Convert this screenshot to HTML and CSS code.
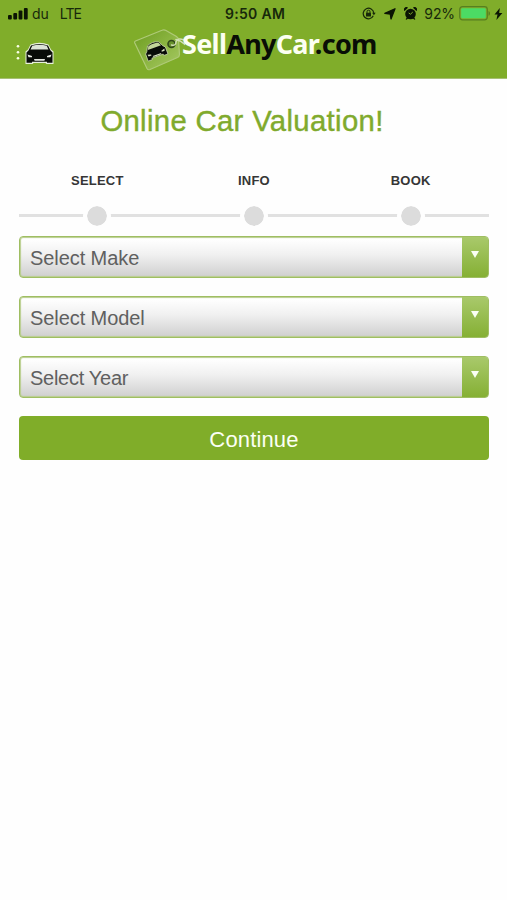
FILE: index.html
```html
<!DOCTYPE html>
<html lang="en">
<head>
<meta charset="utf-8">
<title>SellAnyCar.com</title>
<link rel="stylesheet" href="styles.css">
</head>
<body>
<header class="top">
  <div class="status">
    <div class="carrier">
      <svg class="signal" width="21" height="13" viewBox="0 0 21 13"><rect x="0" y="8" width="3.800" height="4.500" rx="1"/><rect x="5.300" y="6" width="3.800" height="6.500" rx="1"/><rect x="10.600" y="3.500" width="3.800" height="9" rx="1"/><rect x="15.900" y="1" width="3.800" height="11.500" rx="1"/></svg>
      <span class="du">du</span><span class="lte">LTE</span>
    </div>
    <span class="time">9:50 AM</span>
    <div class="power">
      <svg class="lock" width="14" height="13" viewBox="0 0 14 13" fill="none" stroke="#17280a"><path d="M11.3 8.8A5.3 5.3 0 1 1 11.8 6" stroke-width="1.2"/><path d="M10.1 5.8h3.6l-1.8 2.4z" fill="#17280a" stroke="none"/><rect x="4" y="5.7" width="5" height="3.8" rx=".5" fill="#17280a" stroke="none"/><path d="M5 6V4.7a1.5 1.5 0 0 1 3 0V6" stroke-width="1"/></svg>
      <svg class="arrow" width="12" height="12" viewBox="0 0 12 12"><path d="M11 .8 7 11 6.300 6 .8 5.300z" stroke="#0b1404" stroke-width="1.300" stroke-linejoin="round"/></svg>
      <svg class="alarm" width="13" height="13" viewBox="0 0 13 13"><circle cx="6.5" cy="7" r="5.300"/><path d="M.6 4A2.3 2.3 0 0 1 4 .8zM12.4 4A2.3 2.3 0 0 0 9 .8zM2.8 10.5 1.6 12.2l1 .5 1.7-1.4zM10.2 10.5l1.2 1.7-1 .5-1.7-1.4z"/><path d="M6.500 7.200 8.800 5M6.500 7.200 4.700 6" fill="none" stroke="#80ad2a" stroke-width="1"/></svg>
      <span class="percent">92%</span>
      <svg class="battery" width="32" height="15" viewBox="0 0 32 15"><rect x=".7" y=".7" width="27.6" height="13.1" rx="2.8" fill="none" stroke="#577f20" stroke-width="1.2"/><rect x="2.2" y="2.2" width="24.6" height="10.1" rx="1.2" fill="#4cdb64"/><path d="M29.5 4.9c2 .8 2 4 0 4.8z" fill="#577f20"/></svg>
      <svg class="bolt" width="9" height="12" viewBox="0 0 9 12"><path d="M5.8 0 .5 6.5h3L2.4 12 8.4 5H5.2z"/></svg>
    </div>
  </div>
  <div class="bar">
    <svg class="menu" width="40" height="26" viewBox="0 0 40 26">
      <g fill="#fbffe9"><circle cx="3" cy="4.2" r="1.3"/><circle cx="3" cy="10.2" r="1.3"/><circle cx="3" cy="16.2" r="1.3"/></g>
      <path d="M15.500 2.500Q24.500-1 33.500 2.500L36 7.500 38.500 9.500V22H31.500l-1-1H18.500l-1 1H10.500V9.500L13 7.500z" fill="#e8f0db"/>
      <path d="M16 3.500Q24.500.5 33 3.500l2.500 5 2 2v10.300h-5.500V19.800H17v1H11.500V10.500l2-2z" fill="#080b08"/>
      <path d="M17.300 3.700q7.200-2 14.400 0L33.500 7.500H15.500z" fill="#dce3d8"/>
      <path d="M12.500 12.500l4.500 1.400v1.300H13.500zM36.500 12.500l-4.500 1.400v1.300h3.500zM19 17h11l-.6 1.800h-9.800z" fill="#e6e9e2"/>
    </svg>
    <div class="brand">
      <svg class="tag" width="52" height="44" viewBox="0 0 52 44">
        <defs><linearGradient id="tagFill" x1="0" y1="0" x2="1" y2="1"><stop offset="0" stop-color="#6c9c20"/><stop offset=".55" stop-color="#8db643"/><stop offset="1" stop-color="#a8ca67"/></linearGradient></defs>
        <path d="M2.500 14 29 3.200Q31 2.300 33 3.500L43.500 9.500Q45.500 11 45.500 13L46.500 27.500Q46.500 29.500 44.500 30.500L17 42.500Q15 43.300 14 41.500L1.800 16Q1.200 14.600 2.500 14z" fill="url(#tagFill)" stroke="#afca78" stroke-width="1.200"/>
        <g transform="translate(22.500 23.500) rotate(-20)">
          <path d="M-6-7Q0-10 6-7L8.500-2 10.500 0V7.500H6V6H-6V7.500h-4.500V0L-8.500-2z" fill="#080b08" stroke="#cddcad" stroke-width=".7"/>
          <path d="M-5.500-6.300q5.500-2 11 0L7-3H-7z" fill="#c2d49a"/>
          <path d="M-9 1.200l3.500 1v1.200h-3zM9 1.200l-3.500 1v1.200h3zM-4.500 4.200h9L4 5.500h-8z" fill="#d5e0bd"/>
        </g>
        <circle cx="38.500" cy="17" r="3.500" fill="#66902b" stroke="#31491b" stroke-width="1.600"/>
        <path d="M38.500 18q4.500 1 4.500-3 1-4.500 8-2M43 12.500q5 1 9 5" fill="none" stroke="#d1dfb5" stroke-width="1.500" stroke-linecap="round"/>
      </svg>
      <div class="logo"><span class="light">Sell</span>Any<span class="light">Car</span>.com</div>
    </div>
  </div>
</header>
<main class="content">
  <h1><span>Online Car Valuation!</span></h1>
  <ol class="steps">
    <li><span class="name">SELECT</span><span class="track"><i class="dot"></i></span></li>
    <li><span class="name">INFO</span><span class="track"><i class="dot"></i></span></li>
    <li><span class="name">BOOK</span><span class="track"><i class="dot"></i></span></li>
  </ol>
  <form class="fields">
    <div class="select"><span class="value">Select Make</span><span class="drop"><i class="caret"></i></span></div>
    <div class="select"><span class="value">Select Model</span><span class="drop"><i class="caret"></i></span></div>
    <div class="select"><span class="value year">Select Year</span><span class="drop"><i class="caret"></i></span></div>
    <button class="go" type="button">Continue</button>
  </form>
</main>
</body>
</html>
```
FILE: styles.css
```css
* { box-sizing: border-box; }
body { margin: 0; height: 900px; background: #fefefe; font-family: "Liberation Sans", Arial, sans-serif; overflow: hidden; }
svg { display: block; flex: none; }
.top { height: 79px; background: #80ad2a; border-bottom: 1px solid #a7bf75; color: #17280a; fill: #0b1404; }
.status { height: 27px; display: grid; grid-template-columns: 1fr auto 1fr; align-items: center; padding: 0 5px 0 8px; font-family: Inter, sans-serif; font-size: 14px; line-height: 17px; }
.carrier, .power { display: flex; align-items: center; }
.du { margin-left: 3px; }
.lte { margin-left: 11px; letter-spacing: -1px; }
.time { font-weight: 600; font-size: 14px; letter-spacing: .3px; }
.power { justify-content: flex-end; margin-right: -1px; }
.arrow { margin-left: 8px; }
.alarm { margin-left: 8px; }
.percent { margin: 0 4px 0 7px; letter-spacing: -.1px; }
.bolt { margin-left: 3px; }
.bar { height: 51px; display: flex; align-items: flex-start; padding-left: 15px; }
.menu { margin-top: 15px; }
.brand { display: flex; align-items: flex-start; margin-left: 78px; }
.logo { margin: -1px 0 0 -3px; font: 700 27px/36px "Noto Sans", sans-serif; letter-spacing: -.72px; color: #090e06; white-space: nowrap; }
.light { color: #fcfff2; }
.content { padding: 0 18px 0 19px; }
h1 { margin: 0; padding: 23px 0 0; height: 93px; text-align: center; font-weight: 400; font-size: 29.3px; line-height: 37px; letter-spacing: .33px; color: #80aa2d; -webkit-text-stroke: .4px #80aa2d; }
h1 span { position: relative; left: -12px; }
.steps { margin: 0; padding: 0; list-style: none; display: grid; grid-template-columns: repeat(3, 1fr); height: 64px; }
.steps li { display: flex; flex-direction: column; align-items: center; }
.name { font-size: 13px; font-weight: 700; line-height: 18px; letter-spacing: .2px; color: #363636; }
.track { margin-top: 14px; width: 100%; height: 24px; display: flex; align-items: center; justify-content: center; background: linear-gradient(#e1e1e1, #e1e1e1) 0 10px / 100% 3px no-repeat; }
.dot { width: 28px; height: 28px; border: 4px solid #fefefe; border-radius: 50%; background: #dcdcdc; background-clip: padding-box; }
.fields { display: flex; flex-direction: column; gap: 18px; }
.select { height: 42px; display: flex; border: 1.5px solid #9fbe62; border-radius: 4px; overflow: hidden; background: linear-gradient(#fff 5%, #f0f0f0 45%, #cfcfcf); box-shadow: inset 0 0 1px 1px #b9ce8d; }
.value { flex: 1; padding-left: 10px; font-size: 20px; line-height: 42px; letter-spacing: -.08px; color: #606060; }
.year { letter-spacing: -.28px; }
.drop { width: 26px; display: flex; justify-content: center; padding-top: 14px; background: linear-gradient(#a9c96b, #85b034); }
.caret { width: 0; height: 0; border: 4.5px solid transparent; border-top: 7px solid #fbfff4; border-bottom: 0; }
.go { height: 44px; padding: 0; border: 0; border-radius: 4px; background: #80ad29; color: #fbfff4; font: 22px/48px "Liberation Sans", Arial, sans-serif; letter-spacing: .15px; }
```
